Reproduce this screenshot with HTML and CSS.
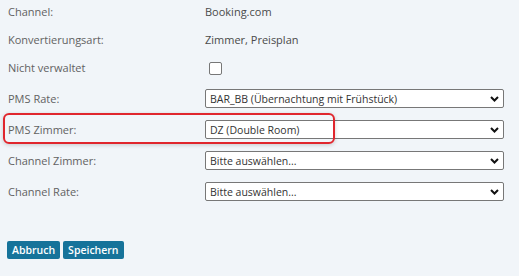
FILE: index.html
```html
<!DOCTYPE html>
<html lang="de">
<head>
<meta charset="utf-8">
<link rel="stylesheet" href="styles.css">
</head>
<body>
<div class="form">
  <div class="row text-row">
    <div class="label">Channel:</div>
    <div class="value">Booking.com</div>
  </div>
  <div class="row text-row">
    <div class="label">Konvertierungsart:</div>
    <div class="value">Zimmer, Preisplan</div>
  </div>
  <div class="row text-row">
    <div class="label">Nicht verwaltet</div>
    <div class="value"><span class="checkbox"></span></div>
  </div>
  <div class="row select-row">
    <div class="label">PMS Rate:</div>
    <div class="select"><span>BAR_BB (Übernachtung mit Frühstück)</span><svg class="chev" width="9" height="6" viewBox="0 0 9 6"><path d="M1 1 L4.5 4.5 L8 1" fill="none" stroke="#111" stroke-width="2"/></svg></div>
  </div>
  <div class="row select-row highlighted">
    <div class="label">PMS Zimmer:</div>
    <div class="select"><span>DZ (Double Room)</span><svg class="chev" width="9" height="6" viewBox="0 0 9 6"><path d="M1 1 L4.5 4.5 L8 1" fill="none" stroke="#111" stroke-width="2"/></svg></div>
    <div class="mark"></div>
  </div>
  <div class="row select-row">
    <div class="label">Channel Zimmer:</div>
    <div class="select"><span>Bitte auswählen...</span><svg class="chev" width="9" height="6" viewBox="0 0 9 6"><path d="M1 1 L4.5 4.5 L8 1" fill="none" stroke="#111" stroke-width="2"/></svg></div>
  </div>
  <div class="row select-row">
    <div class="label">Channel Rate:</div>
    <div class="select"><span>Bitte auswählen...</span><svg class="chev" width="9" height="6" viewBox="0 0 9 6"><path d="M1 1 L4.5 4.5 L8 1" fill="none" stroke="#111" stroke-width="2"/></svg></div>
  </div>
  <div class="buttons">
    <button class="btn">Abbruch</button>
    <button class="btn">Speichern</button>
  </div>
</div>
</body>
</html>
```

FILE: styles.css
```css
html, body {
  margin: 0;
  padding: 0;
  background: #f1f5f9;
}
body {
  font-family: "Open Sans", "Noto Sans", sans-serif;
  font-size: 11px;
  color: #555;
}
.form {
  padding: 0 15px 0 8px;
  width: 496px;
}
.row {
  display: grid;
  grid-template-columns: 197px 299px;
  align-items: start;
  position: relative;
}
.text-row {
  height: 28px;
  line-height: 24px;
}
.select-row {
  height: 31px;
  box-sizing: border-box;
  padding-top: 5px;
}
.select-row .label {
  line-height: 19px;
}
.label {
  color: #626262;
  white-space: nowrap;
}
.value {
  color: #4a4a4a;
  display: flex;
  align-items: center;
  height: 24px;
}
.checkbox {
  display: inline-block;
  width: 11px;
  height: 11px;
  margin-left: 4px;
  border: 1px solid #777;
  border-radius: 2px;
  background: #fff;
}
.select {
  box-sizing: border-box;
  height: 19px;
  border: 1px solid #777;
  border-radius: 2px;
  background: #fff;
  display: flex;
  align-items: center;
  justify-content: space-between;
  padding: 0 4px 0 4px;
  color: #333;
  font-size: 10.5px;
  white-space: nowrap;
}
.chev {
  display: block;
}
.mark {
  position: absolute;
  left: -5px;
  top: -2px;
  width: 328px;
  height: 27px;
  border: 2px solid #e0262d;
  border-radius: 6px;
  box-shadow: 0 1px 4px rgba(0, 0, 0, 0.18);
  pointer-events: none;
}
.buttons {
  display: flex;
  gap: 3px;
  margin-top: 33px;
  margin-left: -1px;
}
.btn {
  font-family: "Open Sans", "Noto Sans", sans-serif;
  font-size: 10.5px;
  font-weight: 600;
  color: #fff;
  background: #16739a;
  border: none;
  border-radius: 2px;
  height: 18px;
  padding: 0 5px;
  line-height: 18px;
}
```
